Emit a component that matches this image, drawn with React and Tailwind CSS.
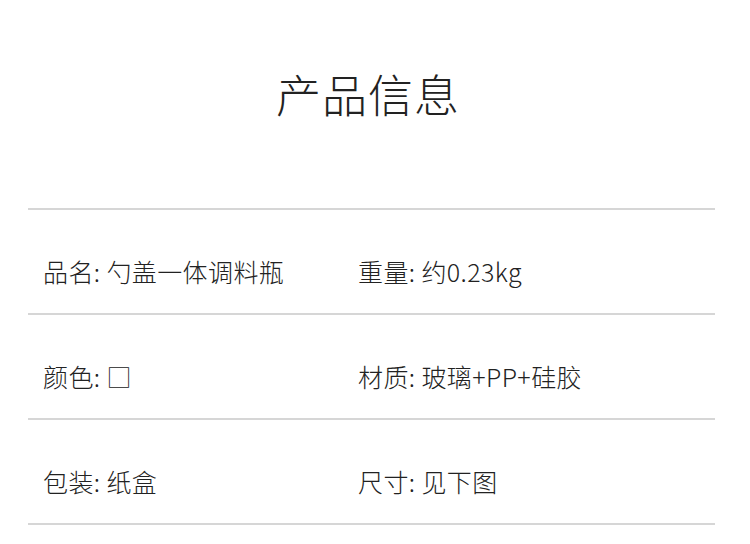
const font = { fontFamily: '"Noto Sans CJK SC", "Noto Sans", sans-serif' };

const rows = [
  ['品名: 勺盖一体调料瓶', '重量: 约0.23kg'],
  ['颜色: □', '材质: 玻璃+PP+硅胶'],
  ['包装: 纸盒', '尺寸: 见下图'],
];

export default function App() {
  return (
    <div className="w-[750px] h-[544px] bg-white overflow-hidden" style={font}>
      <div className="h-[208px] flex justify-center pt-[66px] pr-[14px]">
        <h1 className="text-[45px] leading-[56px] font-extralight tracking-[1px] text-[#222]">产品信息</h1>
      </div>
      <div className="ml-[28px] mr-[35px] border-t-2 border-[#d6d6d6]">
        {rows.map((r, i) => (
          <div
            key={i}
            className="h-[105px] border-b-2 border-[#d6d6d6] grid grid-cols-[315px_1fr] items-center pl-[15px] pt-[20px] text-[25px] font-light tracking-[0.4px] text-[#222]"
          >
            <span>{r[0]}</span>
            <span>{r[1]}</span>
          </div>
        ))}
      </div>
    </div>
  );
}
